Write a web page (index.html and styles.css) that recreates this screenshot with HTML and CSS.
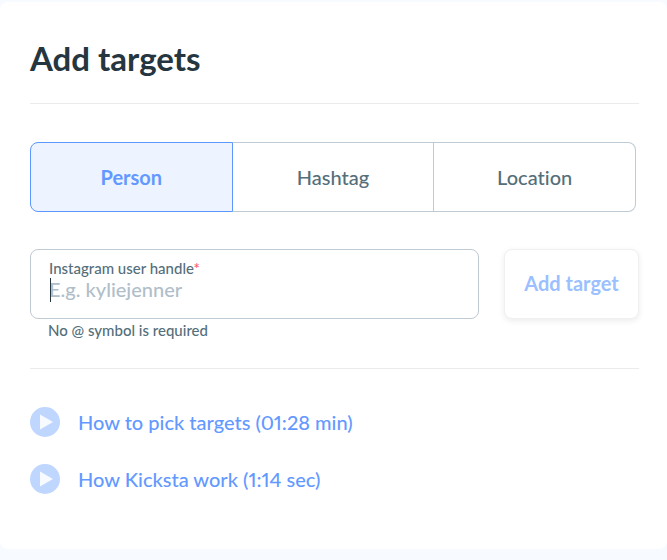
FILE: index.html
```html
<!DOCTYPE html>
<html lang="en">

<head>
    <meta charset="UTF-8">
    <meta name="viewport" content="width=device-width, initial-scale=1.0">
    <title>Add targets</title>
    <link rel="stylesheet" href="styles.css">
</head>

<body>
    <main class="card">
        <h1 class="title">Add targets</h1>

        <div class="tabs">
            <button type="button" class="tab on">Person</button>
            <button type="button" class="tab">Hashtag</button>
            <button type="button" class="tab">Location</button>
        </div>

        <form class="form">
            <div class="field">
                <div class="box">
                    <label class="label" for="handle">Instagram user handle<span class="star">*</span></label>
                    <div class="entry">
                        <input class="input" id="handle" type="text" placeholder="E.g. kyliejenner" aria-describedby="hint">
                    </div>
                </div>
                <p class="hint" id="hint">No @ symbol is required</p>
            </div>
            <button type="button" class="add">Add target</button>
        </form>

        <div class="videos">
            <a class="video" href="#pick">
                <svg class="play" width="30" height="30" viewBox="0 0 30 30" aria-hidden="true">
                    <circle cx="15" cy="15" r="15" fill="#bfd6ff" />
                    <path d="M10 7.5v15L23 15z" fill="#f7faff" />
                </svg>
                <span>How to pick targets (01:28 min)</span>
            </a>
            <a class="video" href="#work">
                <svg class="play" width="30" height="30" viewBox="0 0 30 30" aria-hidden="true">
                    <circle cx="15" cy="15" r="15" fill="#bfd6ff" />
                    <path d="M10 7.5v15L23 15z" fill="#f7faff" />
                </svg>
                <span>How Kicksta work (1:14 sec)</span>
            </a>
        </div>
    </main>
</body>

</html>
```
FILE: styles.css
```css
* {
    box-sizing: border-box;
    margin: 0;
    padding: 0;
}

body {
    padding: 2px 0 11px;
    background: #f7fbff;
    font-family: Lato, "Liberation Sans", sans-serif;
    font-size: 20px;
    line-height: 24px;
    font-weight: 500;
    font-variant-ligatures: none;
    font-variant-numeric: proportional-nums;
    color: #546e7a;
}

button,
input {
    font: inherit;
    font-variant-ligatures: none;
    color: inherit;
}

button {
    cursor: pointer;
}

.card {
    padding: 36px 28px 55px 30px;
    border-radius: 8px;
    background: #fff;
}

.title {
    padding-bottom: 25px;
    border-bottom: 1px solid #ebebeb;
    font-size: 33px;
    line-height: 40px;
    font-weight: 700;
    color: #263640;
}

.tabs {
    display: flex;
    margin: 38px 3px 37px 0;
}

.tab {
    flex: 1;
    height: 70px;
    border: 1px solid #becbd4;
    border-left: 0;
    background: #fff;
}

.tab:first-child {
    border-left: 1px solid #becbd4;
    border-radius: 8px 0 0 8px;
}

.tab:last-child {
    border-radius: 0 8px 8px 0;
}

.tabs .on {
    border-color: #5c97ff;
    background: #edf4ff;
    font-weight: 700;
    color: #6399ff;
}

.form {
    display: flex;
    align-items: flex-start;
    gap: 25px;
    padding-bottom: 29px;
    border-bottom: 1px solid #ebebeb;
}

.field {
    flex: 1;
    min-width: 0;
}

.box {
    height: 70px;
    padding: 9px 18px;
    border: 1px solid #becbd4;
    border-radius: 8px;
}

.label,
.hint {
    display: block;
    font-size: 15px;
    line-height: 18px;
}

.star {
    color: #ff5a6e;
}

.entry {
    position: relative;
}

/* text cursor */
.entry::before {
    content: "";
    position: absolute;
    top: 1px;
    left: 1px;
    width: 1px;
    height: 24px;
    background: #263640;
}

.input {
    display: block;
    width: 100%;
    height: 24px;
    border: 0;
    outline: 0;
    background: none;
    caret-color: transparent;
}

.input::placeholder {
    color: #b0bec9;
}

.hint {
    padding: 2px 18px 0;
}

.add {
    width: 135px;
    height: 70px;
    padding-bottom: 2px;
    border: 1px solid #f0f0f0;
    border-radius: 8px;
    background: #fff;
    box-shadow: 0 2px 6px rgba(0, 0, 0, 0.08);
    font-weight: 700;
    color: #9bbfff;
}

.videos {
    display: flex;
    flex-direction: column;
    align-items: flex-start;
    gap: 27px;
    padding-top: 38px;
}

.video {
    display: flex;
    align-items: center;
    gap: 18px;
    color: #6399ff;
    text-decoration: none;
}

.play {
    flex: none;
}
```
